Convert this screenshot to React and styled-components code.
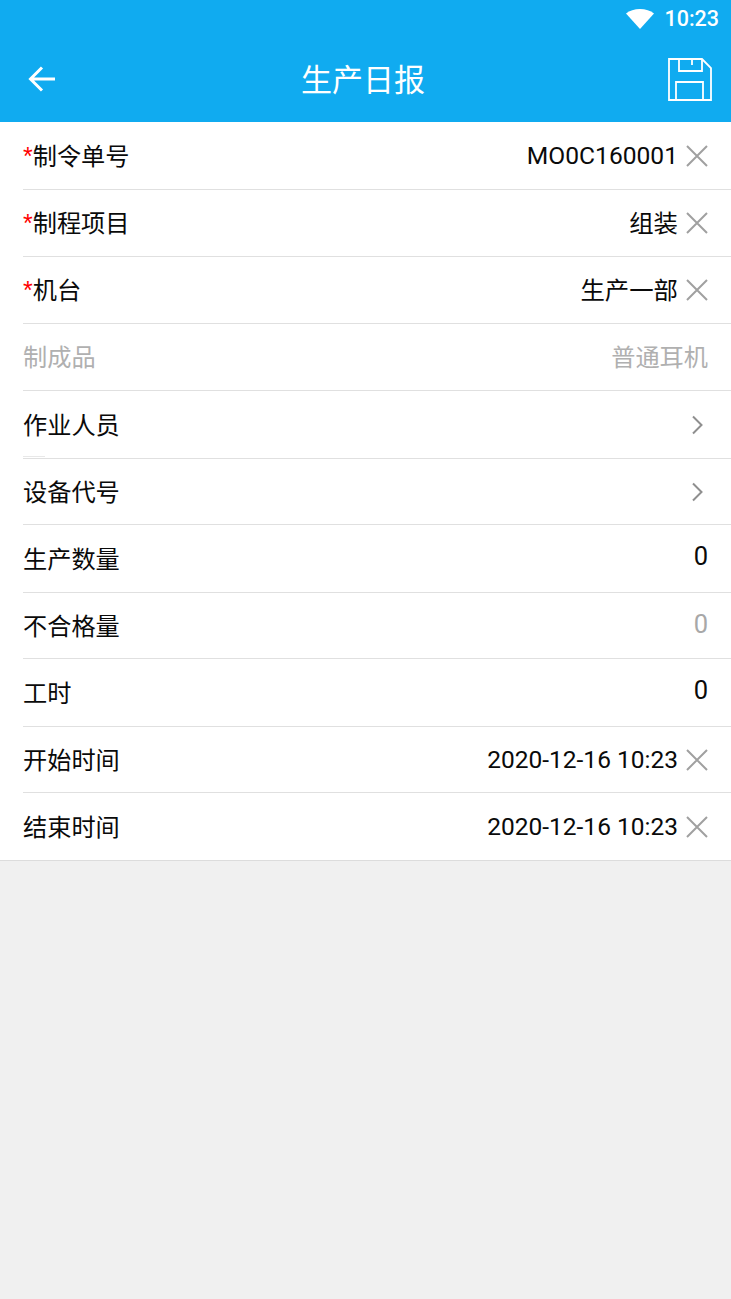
import React from 'react';
import styled, { createGlobalStyle } from 'styled-components';

const GlobalStyle = createGlobalStyle`
  html, body {
    margin: 0;
    padding: 0;
    background-color: #f0f0f0;
  }
  * {
    box-sizing: border-box;
  }
`;

const Page = styled('div')`
  width: 731px;
  height: 1299px;
  overflow: hidden;
  background-color: #f0f0f0;
  font-family: Roboto, 'Noto Sans CJK SC', sans-serif;
`;

const Header = styled('header')`
  height: 122px;
  background-color: #10abf0;
  color: white;
`;

const StatusBar = styled('div')`
  display: flex;
  align-items: center;
  justify-content: flex-end;
  height: 37px;
  padding-right: 12px;
  gap: 10px;
`;

const Time = styled('span')`
  font-size: 21.5px;
  font-weight: 500;
`;

const NavBar = styled('div')`
  display: flex;
  align-items: center;
  justify-content: space-between;
  height: 85px;
  padding: 0 19px 0 28px;
`;

const BackIcon = styled('svg')`
  display: block;
  margin-bottom: 2px;
`;

const Title = styled('h1')`
  margin: 0 0 4px 2px;
  font-size: 31px;
  font-weight: 400;
  font-family: 'Noto Sans CJK SC', sans-serif;
`;

const List = styled('ul')`
  list-style: none;
  margin: 0;
  padding: 0;
  background-color: white;
  border-bottom: 1px solid #dcdcdc;
`;

const Row = styled('li')`
  position: relative;
  display: flex;
  align-items: center;
  justify-content: space-between;
  height: ${(p) => p.$height}px;
  margin-left: ${(p) => (p.$last ? 0 : 23)}px;
  padding: 0 23px 0 ${(p) => (p.$last ? 23 : 0)}px;
  border-bottom: ${(p) => (p.$last ? 'none' : '1px solid #e0e0e0')};
  color: ${(p) => (p.$disabled ? '#b0b0b0' : '#0a0a0a')};

  ${(p) => p.$notch && `
    &::after {
      content: '';
      position: absolute;
      left: 0;
      bottom: 0;
      width: 22px;
      height: 2px;
      background: linear-gradient(#e8e8e8 50%, white 50%);
    }
  `}
`;

const Label = styled('span')`
  margin-bottom: 3px;
  font-size: 24.2px;
  font-family: 'Noto Sans CJK SC', sans-serif;
`;

const Star = styled('span')`
  color: #ff0000;
  font-family: 'Liberation Sans', sans-serif;
  font-size: 25px;
  line-height: 0;
`;

const Right = styled('div')`
  display: flex;
  align-items: center;
`;

const Value = styled('span')`
  margin-bottom: ${(p) => p.$lift}px;
  font-size: ${(p) => p.$size}px;
  color: ${(p) => (p.$muted ? '#a8a8a8' : 'inherit')};
`;

const ClearIcon = styled('svg')`
  display: block;
  margin: 0 -1px 0 7px;
  stroke: #a0a0a0;
`;

const ChevronIcon = styled('svg')`
  display: block;
  margin-right: 5px;
  stroke: #8f8f8f;
`;

const rows = [
  { label: '制令单号', required: true, value: 'MO0C160001', size: 24.6, clear: true, height: 68, lift: 0 },
  { label: '制程项目', required: true, value: '组装', size: 24.4, clear: true, height: 67, lift: 3 },
  { label: '机台', required: true, value: '生产一部', size: 24.4, clear: true, height: 67, lift: 3 },
  { label: '制成品', value: '普通耳机', size: 24.2, disabled: true, height: 67, lift: 3 },
  { label: '作业人员', chevron: true, height: 68, notch: true },
  { label: '设备代号', chevron: true, height: 66 },
  { label: '生产数量', value: '0', size: 25.5, height: 68, lift: 6 },
  { label: '不合格量', value: '0', size: 25.5, muted: true, height: 66, lift: 4 },
  { label: '工时', value: '0', size: 25.5, height: 68, lift: 6 },
  { label: '开始时间', value: '2020-12-16 10:23', size: 24.5, clear: true, height: 66, lift: 0 },
  { label: '结束时间', value: '2020-12-16 10:23', size: 24.5, clear: true, height: 67, lift: 0, last: true },
];

function Clear() {
  return (
    <ClearIcon width="24" height="24" viewBox="0 0 24 24" fill="none" strokeWidth="2">
      <path d="M2 2L22 22M22 2L2 22" />
    </ClearIcon>
  );
}

function Chevron() {
  return (
    <ChevronIcon width="12" height="20" viewBox="0 0 12 20" fill="none" strokeWidth="2">
      <path d="M2 1.500L10.500 10L2 18.500" />
    </ChevronIcon>
  );
}

export default function App() {
  return (
    <Page>
      <GlobalStyle />
      <Header>
        <StatusBar>
          <svg width="28" height="20" viewBox="0 0 28 20">
            <path d="M14 20L0 4.5C3.5 1.6 8.5 0 14 0s10.500 1.600 14 4.500Z" fill="white" />
          </svg>
          <Time>10:23</Time>
        </StatusBar>
        <NavBar>
          <BackIcon width="28" height="28" viewBox="0 0 28 28" fill="none" stroke="white" strokeWidth="3">
            <path d="M14 2.500L2.500 14L14 25.500M3 14H27" />
          </BackIcon>
          <Title>生产日报</Title>
          <svg width="44" height="43" viewBox="0 0 44 43" fill="none" stroke="white" strokeWidth="1.800">
            <path d="M1 1H34L43 10V42H1Z" />
            <path d="M11 1V13H34V1M24 1V7" />
            <path d="M8 42V24H35V42" />
          </svg>
        </NavBar>
      </Header>
      <List>
        {rows.map((row) => (
          <Row key={row.label} $height={row.height} $last={row.last} $disabled={row.disabled} $notch={row.notch}>
            <Label>
              {row.required && <Star>*</Star>}
              {row.label}
            </Label>
            <Right>
              {row.value && <Value $muted={row.muted} $lift={row.lift} $size={row.size}>{row.value}</Value>}
              {row.clear && <Clear />}
              {row.chevron && <Chevron />}
            </Right>
          </Row>
        ))}
      </List>
    </Page>
  );
}
